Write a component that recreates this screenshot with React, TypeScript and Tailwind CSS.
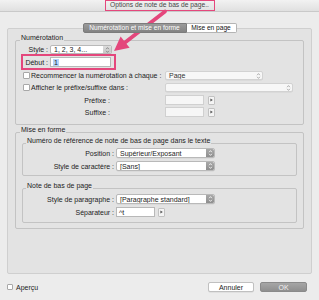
import React from "react";

const PINK = "#e4477c";

function Arrows({ color }: { color: string }) {
  return (
    <svg width="5" height="8" viewBox="0 0 5 8">
      <path d="M1.1 3.2 L2.5 1.6 L3.9 3.2 M1.1 4.8 L2.5 6.4 L3.9 4.8" stroke={color} strokeWidth="0.8" fill="none" />
    </svg>
  );
}

type DDProps = { value?: string; w: string; kind: "gray" | "light" | "plain"; h?: string };

function Dropdown({ value = "", w, kind, h = "h-[10px]" }: DDProps) {
  const plain = kind === "plain";
  return (
    <div
      className={`${w} ${h} flex items-stretch rounded-[2px] border ${
        plain ? "border-[#d2d2d2] bg-[#f7f7f7] text-[#333]" : "border-[#b9b9b9] bg-white"
      } shadow-[0_0.5px_0.5px_rgba(0,0,0,0.08)]`}
    >
      <div className="flex-1 flex items-center pl-[3px] overflow-hidden whitespace-nowrap">{value}</div>
      {kind === "gray" && (
        <div className="w-[8px] flex items-center justify-center rounded-r-[1.5px] bg-gradient-to-b from-[#a9a9a9] to-[#8e8e8e]">
          <Arrows color="#ffffff" />
        </div>
      )}
      {kind === "light" && (
        <div className="w-[8px] flex items-center justify-center rounded-r-[1.5px] bg-gradient-to-b from-[#dcdcdc] to-[#c8c8c8]">
          <Arrows color="#7a7a7a" />
        </div>
      )}
      {kind === "plain" && (
        <div className="w-[8px] flex items-center justify-center">
          <Arrows color="#9a9a9a" />
        </div>
      )}
    </div>
  );
}

function SmallBtn() {
  return (
    <div className="w-[7px] h-[9px] flex items-center justify-center border border-[#c2c2c2] bg-[#f4f4f4] rounded-[1px]">
      <svg width="3" height="4" viewBox="0 0 3 4">
        <path d="M0.4 0.4 L2.8 2 L0.4 3.6 Z" fill="#555" />
      </svg>
    </div>
  );
}

function Check({ size = "w-[7px] h-[7px]" }: { size?: string }) {
  return <div className={`${size} shrink-0 bg-white border border-[#a8a8a8] rounded-[1px]`} />;
}

function Legend({ children, ml = "ml-[4px]" }: { children: React.ReactNode; ml?: string }) {
  return (
    <div className={`-mt-[8px] ${ml} w-fit h-[9px] leading-[9px] px-[1px] bg-[#e3e3e3] whitespace-nowrap`}>
      {children}
    </div>
  );
}

export default function App() {
  return (
    <div className="relative w-[319px] h-[300px] overflow-hidden bg-[#ececec] font-['Liberation_Sans',Arial,sans-serif] text-[7px] leading-none text-[#1c1c1c] flex flex-col">
      {/* title bar */}
      <div className="h-[12px] w-full flex justify-center items-start bg-gradient-to-b from-[#f2f2f2] to-[#e0e0e0] border-b border-[#c9c9c9] shrink-0">
        <div className="w-[110px] h-[11px] border-[1.5px] border-[#e4477c] flex items-center justify-center text-[6.7px] text-[#474747] whitespace-nowrap">
          Options de note de bas de page..
        </div>
      </div>

      {/* tabs */}
      <div className="relative z-10 mt-[11px] h-[10px] flex justify-center shrink-0">
        <div className="w-[104px] h-[10px] flex items-center justify-center rounded-l-[2px] bg-gradient-to-b from-[#9b9b9b] to-[#838383] border border-[#7c7c7c] text-white text-[6.6px] whitespace-nowrap">
          Numérotation et mise en forme
        </div>
        <div className="w-[50px] h-[10px] flex items-center justify-center rounded-r-[2px] bg-white border border-l-0 border-[#b4b4b4] text-[6.6px] text-[#111] whitespace-nowrap">
          Mise en page
        </div>
      </div>

      {/* panel */}
      <div className="-mt-[5px] ml-[7px] w-[305px] h-[246px] shrink-0 bg-[#e3e3e3] border border-[#cfcfcf] rounded-[2px] flex flex-col">
        {/* Numérotation */}
        <div className="mt-[11px] ml-[7px] w-[289px] border border-[#c3c3c3] rounded-[2px] flex flex-col pb-[7px]">
          <Legend>Numérotation</Legend>

          <div className="mt-[3px] h-[9px] flex items-center">
            <div className="w-[32px] text-right whitespace-nowrap">Style :</div>
            <div className="ml-[2px]">
              <Dropdown value="1, 2, 3, 4..." w="w-[62px]" h="h-[9px]" kind="light" />
            </div>
          </div>

          <div className="ml-[5px] w-[95px] h-[16px] border-2 border-[#e4477c] flex items-center">
            <div className="w-[25px] text-right whitespace-nowrap">Début :</div>
            <div className="ml-[2px] w-[61px] h-[10px] bg-white border border-[#b8b8b8] flex items-center pl-[2px]">
              <span className="bg-[#b5d5fb] px-[1px]">1</span>
            </div>
          </div>

          <div className="mt-[1px] h-[9px] flex items-center">
            <div className="ml-[7px]">
              <Check />
            </div>
            <div className="ml-[1px] w-[134px] whitespace-nowrap">Recommencer la numérotation à chaque :</div>
            <Dropdown value="Page" w="w-[98px]" h="h-[9px]" kind="plain" />
          </div>

          <div className="mt-[3px] h-[9px] flex items-center">
            <div className="ml-[7px]">
              <Check />
            </div>
            <div className="ml-[1px] w-[134px] whitespace-nowrap">Afficher le préfixe/suffixe dans :</div>
            <Dropdown w="w-[128px]" h="h-[9px]" kind="plain" />
          </div>

          <div className="mt-[3px] h-[10px] flex items-center">
            <div className="w-[94px] text-right whitespace-nowrap">Préfixe :</div>
            <div className="ml-[55px] w-[39px] h-[10px] bg-[#f6f6f6] border border-[#d0d0d0]" />
            <div className="ml-[4px]">
              <SmallBtn />
            </div>
          </div>

          <div className="mt-[2px] h-[10px] flex items-center">
            <div className="w-[94px] text-right whitespace-nowrap">Suffixe :</div>
            <div className="ml-[55px] w-[39px] h-[10px] bg-[#f6f6f6] border border-[#d0d0d0]" />
            <div className="ml-[4px]">
              <SmallBtn />
            </div>
          </div>
        </div>

        {/* Mise en forme */}
        <div className="mt-[7px] ml-[7px] w-[289px] border border-[#c3c3c3] rounded-[2px] flex flex-col pb-[5px]">
          <Legend>Mise en forme</Legend>

          <div className="mt-[9px] ml-[6px] w-[275px] border border-[#c3c3c3] rounded-[2px] flex flex-col pb-[4px]">
            <Legend ml="ml-[3px]">Numéro de référence de note de bas de page dans le texte</Legend>
            <div className="mt-[3px] h-[10px] flex items-center">
              <div className="w-[91px] text-right whitespace-nowrap">Position :</div>
              <div className="ml-[2px]">
                <Dropdown value="Supérieur/Exposant" w="w-[99px]" kind="gray" />
              </div>
            </div>
            <div className="mt-[3px] h-[10px] flex items-center">
              <div className="w-[91px] text-right whitespace-nowrap">Style de caractère :</div>
              <div className="ml-[2px]">
                <Dropdown value="[Sans]" w="w-[99px]" kind="gray" />
              </div>
            </div>
          </div>

          <div className="mt-[12px] ml-[6px] w-[275px] border border-[#c3c3c3] rounded-[2px] flex flex-col pb-[5px]">
            <Legend ml="ml-[3px]">Note de bas de page</Legend>
            <div className="mt-[4px] h-[10px] flex items-center">
              <div className="w-[91px] text-right whitespace-nowrap">Style de paragraphe :</div>
              <div className="ml-[2px]">
                <Dropdown value="[Paragraphe standard]" w="w-[99px]" kind="gray" />
              </div>
            </div>
            <div className="mt-[3px] h-[10px] flex items-center">
              <div className="w-[91px] text-right whitespace-nowrap">Séparateur :</div>
              <div className="ml-[2px] w-[39px] h-[10px] bg-white border border-[#b8b8b8] flex items-center pl-[2px]">
                ^t
              </div>
              <div className="ml-[3px]">
                <SmallBtn />
              </div>
            </div>
          </div>
        </div>
      </div>

      {/* bottom bar */}
      <div className="mt-[8px] h-[10px] flex items-center shrink-0">
        <div className="ml-[7px]">
          <Check size="w-[6px] h-[6px]" />
        </div>
        <div className="ml-[3px] whitespace-nowrap">Aperçu</div>
        <div className="ml-auto w-[46px] h-[10px] flex items-center justify-center bg-white border border-[#c0c0c0] rounded-[2px] shadow-[0_0.5px_0.5px_rgba(0,0,0,0.1)]">
          Annuler
        </div>
        <div className="ml-[6px] mr-[12px] w-[47px] h-[10px] flex items-center justify-center bg-gradient-to-b from-[#a6a6a6] to-[#8f8f8f] border border-[#8a8a8a] rounded-[2px] text-[#f2f2f2]">
          OK
        </div>
      </div>

      {/* pink annotation arrow */}
      <svg className="absolute left-0 top-0 pointer-events-none" width="319" height="300" viewBox="0 0 319 300">
        <line x1="165" y1="11.5" x2="125" y2="42.5" stroke={PINK} strokeWidth="3.8" strokeLinecap="round" />
        <polygon points="114,51 129.6,47.8 120.6,36.6" fill={PINK} />
      </svg>
    </div>
  );
}
